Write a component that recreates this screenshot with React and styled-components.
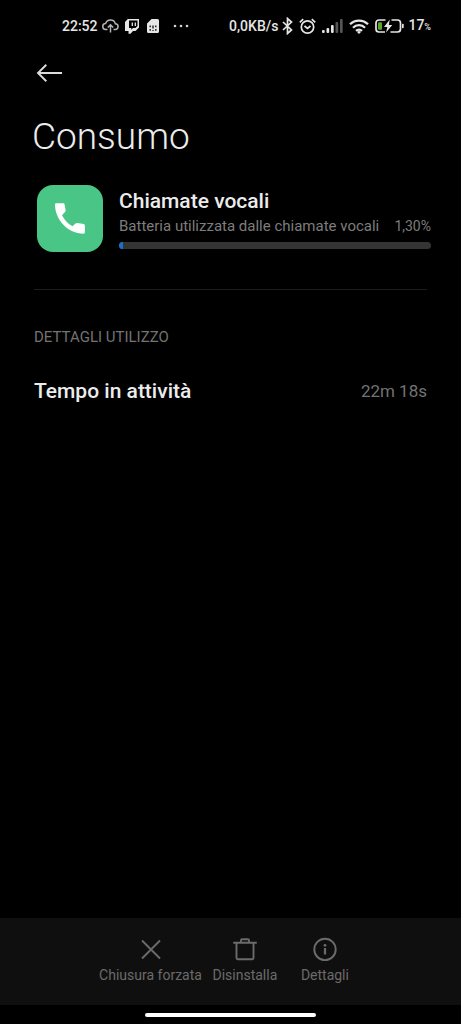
import React from 'react';
import styled, { createGlobalStyle } from 'styled-components';

const GlobalStyle = createGlobalStyle`
  * {
    box-sizing: border-box;
  }

  body {
    margin: 0;
    background: #000;
    font-family: Roboto, sans-serif;
  }
`;

const Screen = styled.div`
  display: flex;
  flex-direction: column;
  min-height: 100vh;
  background: #000;
  color: #ececec;
`;

const StatusBar = styled.header`
  display: flex;
  align-items: center;
  justify-content: space-between;
  height: 52px;
  padding: 0 30px 0 62px;
  font-size: 14px;
  font-weight: 500;
  line-height: 20px;
  color: #e6e6e6;

  svg {
    display: block;
    flex: none;
  }
`;

const StatusGroup = styled.div`
  display: flex;
  align-items: center;
  gap: ${({ $gap }) => $gap}px;
`;

const Level = styled.span`
  display: flex;
  align-items: baseline;
`;

const Percent = styled.small`
  font-size: 9px;
`;

const Toolbar = styled.nav`
  display: flex;
  align-items: center;
  height: 42px;
  padding: 0 36px;
`;

const BackButton = styled.button`
  display: flex;
  padding: 0;
  border: 0;
  background: none;
  color: #dcdcdc;
  cursor: pointer;
`;

const Content = styled.main`
  flex: 1;
`;

const PageTitle = styled.h1`
  margin: 0;
  padding: 19px 32px 0;
  font-size: 37px;
  font-weight: 300;
  line-height: 48px;
`;

const AppRow = styled.section`
  display: flex;
  align-items: center;
  gap: 16px;
  padding: 24px 30px 37px 37px;
`;

const AppIcon = styled.div`
  display: flex;
  align-items: center;
  justify-content: center;
  flex: none;
  width: 66px;
  height: 67px;
  border-radius: 16px;
  background: #49c686;
`;

const AppInfo = styled.div`
  flex: 1;
  min-width: 0;
`;

const AppName = styled.h2`
  margin: 0;
  font-size: 21px;
  font-weight: 500;
  line-height: 26px;
`;

const AppCaption = styled.div`
  display: flex;
  align-items: center;
  justify-content: space-between;
  font-size: 15px;
  line-height: 24px;
  color: #7d7d7d;
  white-space: nowrap;
`;

const AppShare = styled.span`
  font-size: 14px;
`;

const Track = styled.div`
  height: 7px;
  margin-top: 4px;
  border-radius: 4px;
  background: #343434;
  overflow: hidden;
`;

const Fill = styled.div`
  height: 100%;
  background: #1673c8;
`;

const Details = styled.section`
  margin: 0 34px;
  border-top: 1px solid #1c1c1c;
`;

const SectionLabel = styled.h3`
  margin: 0;
  padding-top: 37px;
  font-size: 15px;
  font-weight: 400;
  line-height: 20px;
  color: #737373;
`;

const DetailRow = styled.div`
  display: flex;
  align-items: center;
  justify-content: space-between;
  padding-top: 30px;
  line-height: 28px;
`;

const DetailName = styled.span`
  font-size: 21px;
  font-weight: 500;
`;

const DetailValue = styled.span`
  font-size: 17px;
  color: #737373;
`;

const ActionBar = styled.footer`
  display: flex;
  justify-content: center;
  gap: 6px;
  height: 87px;
  padding-top: 18px;
  background: #0f0f0f;
`;

const ActionButton = styled.button`
  display: flex;
  flex-direction: column;
  align-items: center;
  gap: 4px;
  align-self: flex-start;
  min-width: 74px;
  padding: 0;
  border: 0;
  background: none;
  font-family: inherit;
  font-size: 14px;
  line-height: 18px;
  color: #6b6b6b;
  cursor: pointer;
`;

const GestureArea = styled.div`
  display: flex;
  align-items: center;
  justify-content: center;
  height: 19px;
`;

const GesturePill = styled.div`
  width: 37%;
  height: 4px;
  border-radius: 2px;
  background: #fff;
`;

const CloudIcon = () => (
  <svg width="17" height="14" viewBox="0 0 17 14" fill="none" stroke="#b4b4b4" strokeWidth="1.5">
    <path d="M5.5 10.5H4a3 3 0 0 1-.4-6C4.400 2.300 6.200 1 8.500 1c2.500 0 4.300 1.500 4.800 3.700A2.900 2.900 0 0 1 13 10.500h-1.500" />
    <path d="M8.500 13.500V6M5.800 8.500l2.700-2.700 2.700 2.700" />
  </svg>
);

const TwitchIcon = () => (
  <svg width="14" height="15" viewBox="0 0 14 15">
    <path fill="#e6e6e6" fillRule="evenodd" d="M2.800 0H14v8.500L10.500 12H8L5.500 14.800H3.500V12H0V3zM4 1.500v7.500H6.300v1.700L8 9H10.500l2-2V1.500z" />
    <path stroke="#e6e6e6" strokeWidth="1.300" d="M7.300 3.500v3.500M10.300 3.500v3.500" />
  </svg>
);

const SimIcon = () => (
  <svg width="12" height="14" viewBox="0 0 12 14">
    <path fill="#e6e6e6" d="M4.500 0H10.500A1.500 1.500 0 0 1 12 1.500v11a1.500 1.500 0 0 1-1.500 1.500h-9A1.500 1.500 0 0 1 0 12.500V4.500z" />
    <path stroke="#111" strokeWidth="1.300" d="M3.200 6.500v1.700M6 6.500v3M8.800 6.500v1.700M3.200 10v1.700M6 11v1M8.800 10v1.700" />
  </svg>
);

const DotsIcon = () => (
  <svg width="16" height="4" viewBox="0 0 16 4" fill="#d0d0d0">
    <circle cx="2" cy="2" r="1.300" />
    <circle cx="8" cy="2" r="1.300" />
    <circle cx="14" cy="2" r="1.300" />
  </svg>
);

const BluetoothIcon = () => (
  <svg width="11" height="18" viewBox="0 0 11 18" fill="none" stroke="#e6e6e6" strokeWidth="1.700">
    <path d="M1 5l8.500 8L5.500 16.500v-15L9.500 5 1 13" />
  </svg>
);

const AlarmIcon = () => (
  <svg width="17" height="17" viewBox="0 0 17 17" fill="none" stroke="#e6e6e6" strokeWidth="1.700">
    <circle cx="8.500" cy="9" r="6.200" />
    <path d="M.8 4.300L4.200 1.100M16.200 4.300l-3.400-3.200M5.500 8l3 2.500L11.500 8" />
  </svg>
);

const SignalIcon = () => (
  <svg width="21" height="14" viewBox="0 0 21 14" fill="#e6e6e6">
    <rect x="0" y="11" width="2.700" height="3" rx="1" />
    <rect x="4.500" y="9" width="2.700" height="5" rx="1" />
    <rect x="9" y="6" width="2.700" height="8" rx="1" />
    <rect x="13.500" y="3" width="2.700" height="11" rx="1" fill="#555" />
    <rect x="18" y="0" width="2.700" height="14" rx="1" fill="#555" />
  </svg>
);

const WifiIcon = () => (
  <svg width="20" height="15" viewBox="0 0 20 15" fill="none" stroke="#e6e6e6" strokeWidth="2.300">
    <path d="M1 5.300a12.700 12.700 0 0 1 18 0M4 8.700a8.500 8.500 0 0 1 12 0M7 11.900a4.300 4.300 0 0 1 6 0" />
    <path d="M10 15l-2-2a3 3 0 0 1 4 0z" fill="#e6e6e6" stroke="none" />
  </svg>
);

const BatteryIcon = () => (
  <svg width="29" height="14" viewBox="0 0 29 14" fill="none">
    <path
      d="M10.500 1H4a3 3 0 0 0-3 3v6a3 3 0 0 0 3 3h6M16.500 1H22.500a3 3 0 0 1 3 3v6a3 3 0 0 1-3 3H15.500"
      stroke="#e6e6e6"
      strokeWidth="1.700"
    />
    <rect x="3" y="3.200" width="4" height="7.600" rx="1" fill="#58a82c" />
    <path d="M14.800 .5L9 8h3.300l-1.200 5.500L17.300 6h-3.500z" fill="#e6e6e6" />
    <rect x="27" y="4.700" width="1.700" height="4.600" rx=".8" fill="#e6e6e6" />
  </svg>
);

const BackIcon = () => (
  <svg width="27" height="18" viewBox="0 0 27 18" fill="none" stroke="currentColor" strokeWidth="1.900">
    <path d="M2.200 9H26M10.300.8L2 9l8.300 8.200" />
  </svg>
);

const PhoneIcon = () => (
  <svg width="30" height="31" viewBox="0 0 30 31" fill="#fff">
    <path d="M1.200.3H8.300Q9.400.3 9.600 1.400L10.600 7.200Q10.800 8.300 10 9.100L7 12.200C9 16.400 12.400 20.600 17.500 23.200L20.500 20.600Q21.400 19.800 22.500 20L28.800 21.100Q29.900 21.300 29.900 22.400V29.300Q29.900 30.700 28.500 30.700C13 30.700 0 17 0 1.600Q0 .3 1.200.3z" />
  </svg>
);

const CloseIcon = () => (
  <svg width="26" height="26" viewBox="0 0 26 26" fill="none" stroke="currentColor" strokeWidth="1.900">
    <path d="M4 4.500l18 18M22 4.500l-18 18" />
  </svg>
);

const TrashIcon = () => (
  <svg width="26" height="26" viewBox="0 0 26 26" fill="none" stroke="currentColor" strokeWidth="1.900">
    <path d="M1.200 6.800H24.800M9 6.500V4.200a1 1 0 0 1 1-1H16a1 1 0 0 1 1 1v2.300M4.500 7v15a1.200 1.200 0 0 0 1.200 1.200H20.300A1.200 1.200 0 0 0 21.500 22V7" />
  </svg>
);

const InfoIcon = () => (
  <svg width="26" height="26" viewBox="0 0 26 26" fill="none" stroke="currentColor" strokeWidth="1.900">
    <circle cx="13" cy="13.400" r="10.700" />
    <path d="M13 12v6.500" strokeWidth="2.200" />
    <circle cx="13" cy="9.300" r="1.400" fill="currentColor" stroke="none" />
  </svg>
);

const actions = [
  { label: 'Chiusura forzata', Icon: CloseIcon },
  { label: 'Disinstalla', Icon: TrashIcon },
  { label: 'Dettagli', Icon: InfoIcon },
];

const usage = 1.3;

const App = () => (
  <>
    <GlobalStyle />
    <Screen>
      <StatusBar>
        <StatusGroup $gap={14}>
          <StatusGroup $gap={8}>
            <StatusGroup $gap={6}>
              <StatusGroup $gap={4}>
                <span>22:52</span>
                <CloudIcon />
              </StatusGroup>
              <TwitchIcon />
            </StatusGroup>
            <SimIcon />
          </StatusGroup>
          <DotsIcon />
        </StatusGroup>
        <StatusGroup $gap={6}>
          <StatusGroup $gap={4}>
            <span>0,0KB/s</span>
            <BluetoothIcon />
          </StatusGroup>
          <AlarmIcon />
          <SignalIcon />
          <WifiIcon />
          <StatusGroup $gap={4}>
            <BatteryIcon />
            <Level>
              17<Percent>%</Percent>
            </Level>
          </StatusGroup>
        </StatusGroup>
      </StatusBar>

      <Toolbar>
        <BackButton type="button" aria-label="Indietro">
          <BackIcon />
        </BackButton>
      </Toolbar>

      <Content>
        <PageTitle>Consumo</PageTitle>

        <AppRow>
          <AppIcon>
            <PhoneIcon />
          </AppIcon>
          <AppInfo>
            <AppName>Chiamate vocali</AppName>
            <AppCaption>
              <span>Batteria utilizzata dalle chiamate vocali</span>
              <AppShare>1,30%</AppShare>
            </AppCaption>
            <Track>
              <Fill style={{ width: `${usage}%` }} />
            </Track>
          </AppInfo>
        </AppRow>

        <Details>
          <SectionLabel>DETTAGLI UTILIZZO</SectionLabel>
          <DetailRow>
            <DetailName>Tempo in attività</DetailName>
            <DetailValue>22m 18s</DetailValue>
          </DetailRow>
        </Details>
      </Content>

      <ActionBar>
        {actions.map(({ label, Icon }) => (
          <ActionButton key={label} type="button">
            <Icon />
            {label}
          </ActionButton>
        ))}
      </ActionBar>
      <GestureArea>
        <GesturePill />
      </GestureArea>
    </Screen>
  </>
);

export default App;
